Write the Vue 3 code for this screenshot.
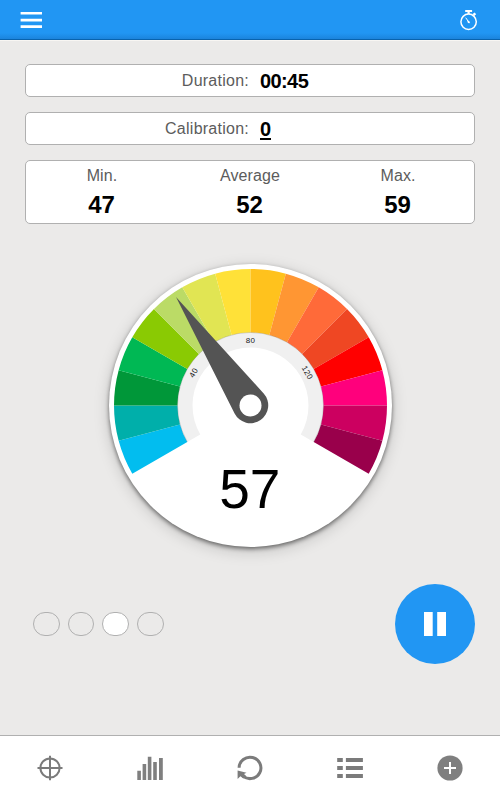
<script setup>
const colors = [
  '#02bdef', '#00afaa', '#009739', '#00b854', '#8aca03', '#bbdb66', '#e1e553', '#ffe138',
  '#ffc21d', '#ff9633', '#ff6a39', '#ef4723', '#ff0000', '#ff007c', '#cc0060', '#99004b',
]

const point = (radius, degrees) => {
  const a = (degrees * Math.PI) / 180
  return `${(radius * Math.sin(a)).toFixed(2)} ${(-radius * Math.cos(a)).toFixed(2)}`
}

const ring = (outer, inner, from, to) => {
  const large = to - from > 180 ? 1 : 0
  return `M${point(outer, from)}A${outer} ${outer} 0 ${large} 1 ${point(outer, to)}L${point(inner, to)}A${inner} ${inner} 0 ${large} 0 ${point(inner, from)}Z`
}

const segments = colors.map((color, i) => ({
  color,
  d: ring(136.5, 73, -120 + i * 15, -105 + i * 15),
}))

const stats = [
  { label: 'Min.', value: 47 },
  { label: 'Average', value: 52 },
  { label: 'Max.', value: 59 },
]
</script>

<template>
  <div class="screen">
    <header class="topbar">
      <svg class="menu" width="22" height="18" viewBox="0 0 22 18">
        <path d="M.6 2.2H22M.6 9.1H22M.6 15.6H22" stroke="#fff" stroke-width="2.6" />
      </svg>
      <svg class="timer" width="20" height="22" viewBox="0 0 20 22" fill="none" stroke="#fff">
        <circle cx="9.6" cy="12.8" r="7.7" stroke-width="1.5" />
        <path d="M6.2 2h6.9M9.6 2v3" stroke-width="2.2" />
        <path d="M14.4 6l2-1.7" stroke-width="2.4" />
        <path d="M6.7 8.7l3.2 4.5" stroke-width="1" />
        <path d="M8.7 13.3l-.8-2.5 3.2 2.3-1 1.5z" fill="#fff" stroke="none" />
      </svg>
    </header>

    <main class="content">
      <section class="card row">
        <span class="label">Duration:</span>
        <span class="reading">00:45</span>
      </section>
      <section class="card row">
        <span class="label">Calibration:</span>
        <span class="reading"><span class="underlined">0</span></span>
      </section>
      <section class="card stats">
        <div v-for="stat in stats" :key="stat.label" class="stat">
          <span class="label">{{ stat.label }}</span>
          <span class="amount">{{ stat.value }}</span>
        </div>
      </section>

      <div class="gauge">
        <svg width="283" height="283" viewBox="-141.5 -141.5 283 283">
          <path :d="ring(73, 58, -120, 120)" fill="#f0f0f0" />
          <path v-for="segment in segments" :key="segment.color" :d="segment.d" :fill="segment.color" />
          <path d="M-63.2 36.5A73 73 0 1 1 63.2 36.5" fill="none" stroke="#777" stroke-opacity=".45" stroke-width=".6" />
          <g class="ticks">
            <text transform="rotate(-60)" y="-63">40</text>
            <text y="-63">80</text>
            <text transform="rotate(60)" y="-63">120</text>
          </g>
          <path d="M-74.5 -108.5L13.2 -12A17.8 17.8 0 1 1 -15.9 8Z" fill="#545454" />
          <circle r="11" fill="#fff" />
          <text class="level" x="-.7" y="102">57</text>
        </svg>
      </div>

      <div class="controls">
        <div class="pages">
          <i class="dot"></i><i class="dot"></i><i class="dot active"></i><i class="dot"></i>
        </div>
        <button class="pause" aria-label="Pause">
          <svg width="22" height="24" viewBox="0 0 22 24" fill="#fff">
            <path d="M0 0h8.7v24H0zM13.2 0H22v24h-8.8z" />
          </svg>
        </button>
      </div>
    </main>

    <nav class="tabs">
      <span class="tab">
        <svg width="28" height="28" viewBox="0 0 28 28" fill="none" stroke="#7b7b7b" stroke-width="2">
          <circle cx="14" cy="14" r="9.6" />
          <path d="M14 1.8v24.4M1.5 14h25" />
        </svg>
      </span>
      <span class="tab">
        <svg width="28" height="28" viewBox="0 0 28 28" fill="#7f7f7f">
          <path d="M1.3 16.8h3.6v9.2H1.3zM6.6 10h3.6v16H6.6zM11.8 2.8h3.6V26h-3.6zM17.2 8h3.6v18h-3.6zM23 4h3.8v22H23z" />
        </svg>
      </span>
      <span class="tab">
        <svg width="28" height="28" viewBox="0 0 28 28" fill="none" stroke="#7b7b7b" stroke-width="3">
          <path d="M3.1 13.8A10.9 10.7 0 1 1 7 22.1" />
          <path d="M1.6 16.5L10.5 18.7 8 20 10.6 22.5 7.3 24.5 4.4 22.2 1.6 25Z" fill="#7b7b7b" stroke="none" />
        </svg>
      </span>
      <span class="tab">
        <svg width="28" height="28" viewBox="0 0 28 28" fill="#7b7b7b">
          <path d="M1.2 4h5.6v4H1.2zM9.9 4h17v4h-17zM1.2 12h5.6v4H1.2zM9.9 12h17v4h-17zM1.2 20h5.6v4H1.2zM9.9 20h17v4h-17z" />
        </svg>
      </span>
      <span class="tab">
        <svg width="28" height="28" viewBox="0 0 28 28">
          <circle cx="14" cy="14" r="12.6" fill="#7f7f7f" />
          <path d="M14 8v12M8 14h12" stroke="#fff" stroke-width="2" />
        </svg>
      </span>
    </nav>
  </div>
</template>

<style>
body {
  margin: 0;
  background: #ebeae9;
}
</style>

<style scoped>
.screen {
  display: flex;
  flex-direction: column;
  width: 500px;
  height: 800px;
  overflow: hidden;
  background: #ebeae9;
  font-family: "Liberation Sans", Arial, sans-serif;
}
.topbar {
  display: flex;
  justify-content: space-between;
  align-items: flex-start;
  box-sizing: border-box;
  height: 40px;
  padding: 9px 21px 0 20px;
  background: linear-gradient(#2196f3 33px, #1b84dc 39px, #0963ad 39px);
  box-shadow: 0 1px 0 #f8f6f3;
}
.menu {
  margin-top: 2px;
}
.content {
  display: flex;
  flex: 1;
  flex-direction: column;
  padding: 24px 25px 0;
}
.card {
  box-sizing: border-box;
  flex: none;
  background: #fff;
  border: 1px solid #b0b0b0;
  border-radius: 5px;
  margin-bottom: 15px;
}
.row {
  display: grid;
  grid-template-columns: 223px 1fr;
  column-gap: 11px;
  align-items: center;
  height: 33px;
}
.row .label {
  text-align: right;
}
.label {
  color: #5c5c5c;
  font-size: 16px;
  line-height: 18px;
  letter-spacing: 0.25px;
}
.stat .label {
  letter-spacing: 0.1px;
}
.reading {
  color: #000;
  font-size: 20px;
  font-weight: 700;
  line-height: 24px;
  letter-spacing: -0.6px;
}
.underlined {
  display: inline-block;
  height: 19px;
  line-height: 20px;
  border-bottom: 2px solid #000;
}
.stats {
  display: flex;
  justify-content: space-between;
  height: 64px;
  margin-bottom: 0;
  padding: 6px 2px 0 2px;
}
.stat {
  display: flex;
  flex-direction: column;
  align-items: center;
  width: 148px;
}
.amount {
  color: #000;
  font-size: 24px;
  font-weight: 700;
  line-height: 28px;
  margin-top: 6px;
  margin-right: 1px;
}
.gauge {
  display: flex;
  align-self: center;
  width: 283px;
  height: 283px;
  margin-top: 39.5px;
  margin-left: 0.5px;
  border-radius: 50%;
  background: #fff;
  box-shadow: 0 2px 4px rgba(0, 0, 0, 0.5), 0 4px 16px rgba(0, 0, 0, 0.18);
}
.ticks {
  fill: #222;
  font-size: 8px;
  letter-spacing: 0.4px;
  text-anchor: middle;
}
.level {
  fill: #000;
  font-size: 55px;
  text-anchor: middle;
}
.controls {
  display: flex;
  align-items: center;
  justify-content: space-between;
  margin-top: 37.5px;
  padding-left: 8px;
}
.pages {
  display: flex;
  gap: 8px;
}
.dot {
  box-sizing: border-box;
  width: 26.7px;
  height: 24px;
  border: 1px solid #b0b0b0;
  border-radius: 12px;
}
.active {
  background: #fff;
}
.pause {
  display: flex;
  align-items: center;
  justify-content: center;
  width: 80px;
  height: 80px;
  padding: 0;
  border: 0;
  border-radius: 50%;
  background: #2196f3;
}
.tabs {
  display: flex;
  flex: none;
  box-sizing: border-box;
  height: 65px;
  border-top: 1px solid #b0b0b0;
  background: #fff;
}
.tab {
  display: flex;
  flex: 1;
  align-items: center;
  justify-content: center;
}
</style>
